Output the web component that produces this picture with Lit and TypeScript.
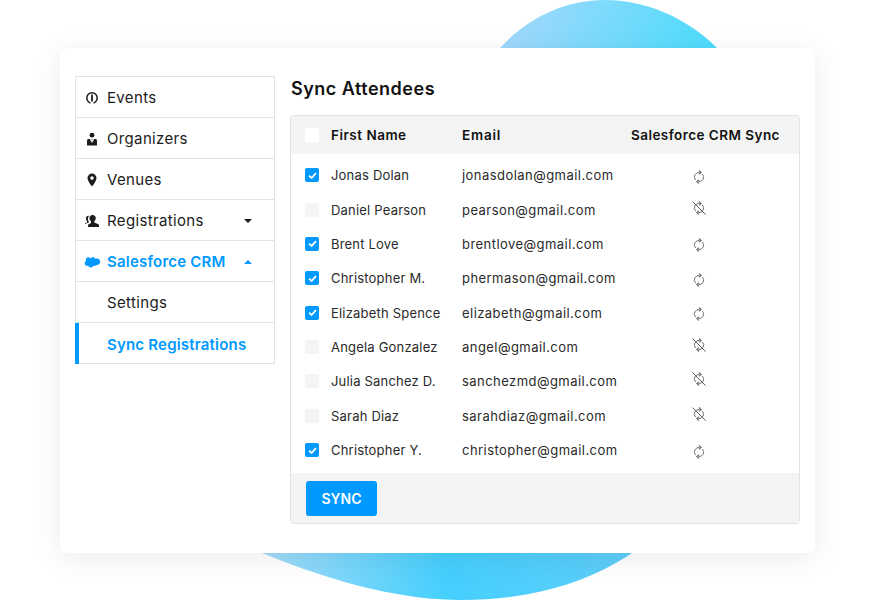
import { LitElement, html, css, svg, nothing } from 'lit';
import { customElement } from 'lit/decorators.js';

const attendees = [
  { name: 'Jonas Dolan', email: 'jonasdolan@gmail.com', synced: true },
  { name: 'Daniel Pearson', email: 'pearson@gmail.com', synced: false },
  { name: 'Brent Love', email: 'brentlove@gmail.com', synced: true },
  { name: 'Christopher M.', email: 'phermason@gmail.com', synced: true },
  { name: 'Elizabeth Spence', email: 'elizabeth@gmail.com', synced: true },
  { name: 'Angela Gonzalez', email: 'angel@gmail.com', synced: false },
  { name: 'Julia Sanchez D.', email: 'sanchezmd@gmail.com', synced: false },
  { name: 'Sarah Diaz', email: 'sarahdiaz@gmail.com', synced: false },
  { name: 'Christopher Y.', email: 'christopher@gmail.com', synced: true },
];

const icons = {
  events: svg`<circle cx="7" cy="7" r="5.2" fill="none" stroke="currentColor" stroke-width="1.5"/><rect x="6.100" y="3.600" width="1.800" height="7" fill="currentColor"/><rect x="5.600" y="10.800" width="2.800" height="2.400" fill="#fff"/>`,
  organizers: svg`<circle cx="7" cy="3.200" r="2.400" fill="currentColor"/><path d="M2 13.500V8.600c0-1 .7-1.700 1.700-1.700h1.300L6.400 11l.6-3-.6-1.100h1.200L7 8l.6 3 1.400-4.100h1.300c1 0 1.700.7 1.700 1.700v4.900z" fill="currentColor"/>`,
  venues: svg`<path fill-rule="evenodd" d="M7 .6a4.500 4.500 0 0 0-4.500 4.500C2.500 8.300 7 13.600 7 13.600s4.500-5.300 4.500-8.500A4.500 4.500 0 0 0 7 .6zm0 6.300a1.800 1.800 0 1 1 0-3.600 1.800 1.800 0 0 1 0 3.600z" fill="currentColor"/>`,
  registrations: svg`<path d="M7.600 1c2 0 3.200 1.400 3.200 3.100 0 1.300-.6 2.500-1.500 3.200v1.100l3.600 1.500c.7.3 1.100.8 1.100 1.600V13H3v-1.500c0-.8.4-1.300 1.100-1.600l1.900-.8V7.300C5 6.600 4.400 5.400 4.400 4.100 4.400 2.400 5.600 1 7.600 1z" fill="currentColor"/><path d="M3.200 1.800c.3 0 .6 0 .9.100-.8.700-1.200 1.700-1.200 2.800 0 1 .3 2 .9 2.800v.9L1 9.500c-.5.200-.9.600-1 1.100V9.300l2-.9V7C1.300 6.400 1 5.400 1 4.400c0-1.500.9-2.600 2.200-2.600z" fill="currentColor"/>`,
  salesforce: svg`<path d="M5.400 3.400c.6-.7 1.500-1.100 2.400-1.100 1.200 0 2.200.6 2.800 1.600.5-.2.9-.3 1.400-.3 1.800 0 3.200 1.400 3.200 3.200s-1.400 3.200-3.200 3.200c-.2 0-.5 0-.7-.1-.4.700-1.200 1.200-2.100 1.200-.4 0-.7-.1-1-.2-.4.900-1.300 1.500-2.400 1.500s-2-.6-2.400-1.600c-.2 0-.4.100-.6.100C.9 10.900-.3 9.700-.3 8.200c0-1 .5-1.800 1.300-2.300-.2-.3-.2-.7-.2-1.100C.8 3.300 2 2.200 3.400 2.200c.8 0 1.500.5 2 1.200z" fill="currentColor"/>`,
};

const menu = [
  { label: 'Events', icon: icons.events },
  { label: 'Organizers', icon: icons.organizers },
  { label: 'Venues', icon: icons.venues },
  { label: 'Registrations', icon: icons.registrations, caret: 'down' },
  { label: 'Salesforce CRM', icon: icons.salesforce, caret: 'up', active: true },
  { label: 'Settings', sub: true },
  { label: 'Sync Registrations', sub: true, active: true, current: true },
];

@customElement('app-root')
export class AppRoot extends LitElement {
  static styles = css`
    :host {
      display: block;
      position: relative;
      width: 875px;
      height: 600px;
      overflow: hidden;
      background: #fff;
      font-family: 'Inter', 'Open Sans', sans-serif;
      color: #1c1c1c;
    }

    .blob {
      position: absolute;
      left: 0;
      top: 0;
      width: 875px;
      height: 600px;
    }

    .page {
      position: relative;
      box-sizing: border-box;
      height: 600px;
      padding: 48px 60px 47px;
    }

    .card {
      display: flex;
      gap: 15px;
      box-sizing: border-box;
      height: 505px;
      padding: 28px 15px 29px;
      background: #fff;
      border-radius: 8px;
      box-shadow: 0 5px 30px rgba(0, 0, 0, 0.08);
    }

    .menu {
      flex: none;
      width: 200px;
      height: 288px;
      box-sizing: border-box;
      border: 1px solid #e3e3e3;
    }

    .item {
      display: flex;
      align-items: center;
      box-sizing: border-box;
      height: 41px;
      padding: 1px 0 0 9px;
      border-bottom: 1px solid #e3e3e3;
      font-size: 15px;
      letter-spacing: 0.35px;
      position: relative;
    }

    .item:last-child {
      border-bottom: 0;
    }

    .item.active {
      color: #0099ff;
      font-weight: 600;
      letter-spacing: 0.2px;
    }

    .item.sub {
      padding-left: 31px;
    }

    .item.current::before {
      content: '';
      position: absolute;
      left: -1px;
      top: 0;
      bottom: 0;
      width: 4px;
      background: #0099ff;
    }

    .item svg.ico {
      flex: none;
      width: 14px;
      height: 14px;
      margin-right: 8px;
      overflow: visible;
    }

    .caret {
      margin-left: auto;
      margin-right: 22px;
      width: 0;
      height: 0;
      border-left: 4px solid transparent;
      border-right: 4px solid transparent;
    }

    .caret.down {
      border-top: 4px solid currentColor;
    }

    .caret.up {
      border-bottom: 4px solid currentColor;
    }

    .main {
      flex: 1;
      min-width: 0;
      display: flex;
      flex-direction: column;
    }

    h2 {
      margin: 0 0 14px 1px;
      height: 25px;
      line-height: 25px;
      font-size: 18px;
      font-weight: 600;
      color: #111;
      letter-spacing: 0.5px;
    }

    .table {
      flex: none;
      height: 409px;
      box-sizing: border-box;
      display: flex;
      flex-direction: column;
      border: 1px solid #e2e2e2;
      border-radius: 4px;
      overflow: hidden;
    }

    .row {
      display: grid;
      grid-template-columns: 26px 131px 169px 1fr;
      align-items: center;
      height: 34.375px;
      padding-left: 14px;
      font-size: 13px;
      color: #2a2a2a;
    }

    .row.head {
      height: 38px;
      background: #f4f4f4;
      font-size: 13.500px;
      font-weight: 600;
      color: #111;
    }

    .rows {
      flex: 1;
      padding-top: 4px;
    }

    .name {
      letter-spacing: 0.2px;
    }

    .email {
      letter-spacing: 0.45px;
    }

    .head .name {
      letter-spacing: 0.5px;
    }

    .head .email {
      letter-spacing: 0.8px;
    }

    .head .title {
      white-space: nowrap;
      letter-spacing: 0.45px;
    }

    .box {
      display: flex;
      align-items: center;
      justify-content: center;
      width: 14px;
      height: 14px;
      border-radius: 2px;
      background: #f4f4f4;
    }

    .head .box {
      background: #fff;
    }

    .box.on {
      background: #0099ff;
    }

    .box svg {
      width: 9px;
      height: 9px;
    }

    .sync {
      display: flex;
      margin-top: 3px;
      padding-left: 61px;
    }

    .sync svg {
      width: 14px;
      height: 14px;
      overflow: visible;
    }

    .sync.off {
      margin-top: -4px;
    }

    .foot {
      flex: none;
      height: 50px;
      box-sizing: border-box;
      padding: 8px 15px;
      background: #f4f4f4;
    }

    button {
      display: block;
      width: 71px;
      height: 35px;
      padding: 0;
      border: 0;
      border-radius: 3px;
      background: #0099ff;
      color: #fff;
      font: 600 14px 'Inter', sans-serif;
    }
  `;

  private syncIcon(on: boolean) {
    return html`<svg viewBox="0 0 14 14" fill="none" stroke="#707070" stroke-width="1">
      <path d="M3.600 10A4.500 4.500 0 0 1 7.600 2.500" />
      <path d="M10.400 4A4.500 4.500 0 0 1 6.400 11.500" />
      <path d="M7 .5 9.200 2.500 7 4.300" stroke-width="1.100" />
      <path d="M7 9.700 4.800 11.500 7 13.500" stroke-width="1.100" />
      ${on ? nothing : svg`<path d="M.6 .6 13.600 13.600" stroke="#5a5a5a" />`}
    </svg>`;
  }

  private checkbox(on: boolean) {
    return html`<span class="box ${on ? 'on' : ''}">
      ${on
        ? html`<svg viewBox="0 0 10 10" fill="none" stroke="#fff" stroke-width="2"><path d="M1.200 5.200 4 7.800 8.800 2.400" /></svg>`
        : nothing}
    </span>`;
  }

  render() {
    return html`
      <svg class="blob" viewBox="0 0 875 600">
        <defs>
          <linearGradient id="top" x1="0" x2="1" y1="0.2" y2="0.3">
            <stop offset="0" stop-color="#a8d8fb" />
            <stop offset="1" stop-color="#4fdcfd" />
          </linearGradient>
          <linearGradient id="bottom" x1="0" x2="1" y1="0" y2="0">
            <stop offset="0" stop-color="#a5dcf9" />
            <stop offset="0.5" stop-color="#45cffd" />
            <stop offset="1" stop-color="#5fcdf9" />
          </linearGradient>
        </defs>
        <path fill="url(#top)" d="M500 48C528 17 566 0 605 0C645 0 686 17 717 48Z" />
        <path fill="url(#bottom)" d="M262 553C340 585 405 600 462 600C525 600 585 585 632 553Z" />
      </svg>
      <div class="page">
        <div class="card">
          <nav class="menu">
            ${menu.map(
              (m) => html`<div class="item ${m.active ? 'active' : ''} ${m.sub ? 'sub' : ''} ${m.current ? 'current' : ''}">
                ${m.icon ? html`<svg class="ico" viewBox="0 0 14 14">${m.icon}</svg>` : nothing}
                <span>${m.label}</span>
                ${m.caret ? html`<span class="caret ${m.caret}"></span>` : nothing}
              </div>`,
            )}
          </nav>
          <section class="main">
            <h2>Sync Attendees</h2>
            <div class="table">
              <div class="row head">
                <span class="box"></span>
                <span class="name">First Name</span>
                <span class="email">Email</span>
                <span class="title">Salesforce CRM Sync</span>
              </div>
              <div class="rows">
                ${attendees.map(
                  (a) => html`<div class="row">
                    ${this.checkbox(a.synced)}
                    <span class="name">${a.name}</span>
                    <span class="email">${a.email}</span>
                    <span class="sync ${a.synced ? '' : 'off'}">${this.syncIcon(a.synced)}</span>
                  </div>`,
                )}
              </div>
              <div class="foot"><button>SYNC</button></div>
            </div>
          </section>
        </div>
      </div>
    `;
  }
}
